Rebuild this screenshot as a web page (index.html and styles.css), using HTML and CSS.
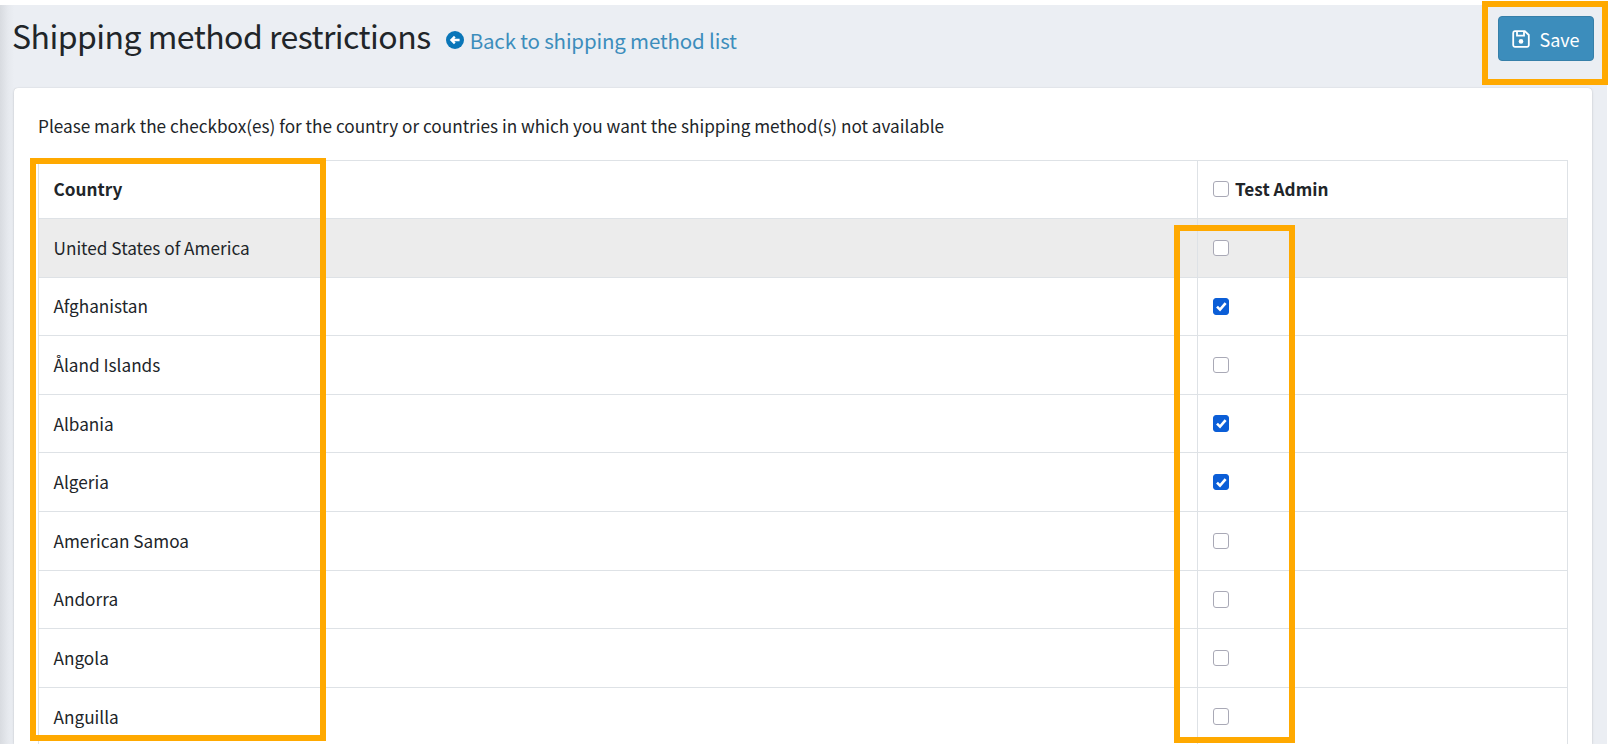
FILE: index.html
```html
<!DOCTYPE html>
<html lang="en">
<head>
<meta charset="utf-8">
<title>Shipping method restrictions</title>
<link rel="stylesheet" href="styles.css">
</head>
<body>
<div class="page">
  <header class="head">
    <div class="head-left">
      <h1 class="title">Shipping method restrictions</h1>
      <a class="back" href="#">
        <svg class="back-icon" viewBox="0 0 18 18" aria-hidden="true"><circle cx="9" cy="9" r="9" fill="#0a76b8"/><path d="M13.6 9H5.6M8.8 5.6L5.4 9l3.4 3.4" fill="none" stroke="#fff" stroke-width="2.3"/></svg>
        <span>Back to shipping method list</span>
      </a>
    </div>
    <button class="save" type="button">
      <svg class="save-icon" viewBox="0 0 18 18" aria-hidden="true"><path d="M2.8 1.2h10L16.8 5v10a1.8 1.8 0 0 1-1.8 1.8H3A1.8 1.8 0 0 1 1.2 15V3a1.8 1.8 0 0 1 1.6-1.8z" fill="none" stroke="#fff" stroke-width="1.8"/><path d="M5 1.6v4h7v-4" fill="none" stroke="#fff" stroke-width="1.8"/><circle cx="9" cy="11.4" r="2.3" fill="#fff"/></svg>
      <span>Save</span>
    </button>
  </header>
  <main class="card">
    <p class="hint">Please mark the checkbox(es) for the country or countries in which you want the shipping method(s) not available</p>
    <table class="grid">
      <thead>
        <tr><th class="c-country">Country</th><th class="c-admin"><label class="all"><input type="checkbox" class="box"><span>Test Admin</span></label></th></tr>
      </thead>
      <tbody>
        <tr class="hl"><td>United States of America</td><td><input type="checkbox" class="box"></td></tr>
        <tr><td>Afghanistan</td><td><input type="checkbox" class="box" checked></td></tr>
        <tr><td>Åland Islands</td><td><input type="checkbox" class="box"></td></tr>
        <tr><td>Albania</td><td><input type="checkbox" class="box" checked></td></tr>
        <tr><td>Algeria</td><td><input type="checkbox" class="box" checked></td></tr>
        <tr><td>American Samoa</td><td><input type="checkbox" class="box"></td></tr>
        <tr><td>Andorra</td><td><input type="checkbox" class="box"></td></tr>
        <tr><td>Angola</td><td><input type="checkbox" class="box"></td></tr>
        <tr><td>Anguilla</td><td><input type="checkbox" class="box"></td></tr>
      </tbody>
    </table>
  </main>
  <div class="mark mark-save"></div>
  <div class="mark mark-country"></div>
  <div class="mark mark-boxes"></div>
</div>
</body>
</html>
```
FILE: styles.css
```css
* { box-sizing: border-box; }
html, body { margin: 0; height: 744px; overflow: hidden; background: #fff; }
body { padding: 5px 0 0; font-family: "Noto Sans CJK SC", "Noto Sans", sans-serif; color: #212529; font-size: 17px; }
.page {
  position: relative;
  width: 1607px;
  height: 739px;
  padding: 0 15px 0 14px;
  background: linear-gradient(90deg, #d8dbe0 0, #e6e9ee 8px, #ebeef3 14px);
}
.head { display: flex; justify-content: space-between; align-items: flex-start; height: 83px; }
.head-left { display: flex; align-items: center; height: 62px; }
.title { margin: 0 0 2px -2px; font-size: 32px; letter-spacing: -0.53px; font-weight: 400; line-height: 40px; color: #212529; }
.back { display: flex; align-items: center; margin-left: 15px; margin-top: 7px; color: #3c8dbc; font-size: 20.5px; letter-spacing: -0.16px; line-height: 30px; text-decoration: none; }
.back-icon { width: 18px; height: 18px; margin-right: 6px; }
.save {
  display: flex; align-items: center; justify-content: center; gap: 9px;
  width: 96px; height: 45px; margin: 11px -2px 0 0; padding: 1px 0 0;
  background: #3c8dbc; border: 1px solid #367fa9; border-radius: 4px;
  color: #fff; font: inherit; font-size: 18px; line-height: 24px;
}
.save-icon { width: 18px; height: 18px; }
.card {
  height: 656px; padding: 25px 25px 0 25px; overflow: hidden;
  background: #fff; border-radius: 4px 4px 0 0;
  box-shadow: 0 0 1px rgba(0,0,0,.2), 0 1px 3px rgba(0,0,0,.12);
}
.hint { margin: 0 0 25px -1px; font-size: 17.2px; line-height: 26px; height: 22px; }
.grid { width: 1530px; border-collapse: collapse; table-layout: fixed; margin-left: -1px; }
.grid th, .grid td { border: 1px solid #dee2e6; padding: 0 15px 0 14.5px; text-align: left; height: 58.6px; vertical-align: middle; line-height: 24px; font-size: 17.2px; }
.grid thead th { height: 58px; font-weight: 700; line-height: 22px; padding-bottom: 1px; }
.c-admin { width: 370px; }
.hl td { background: #ececec; }
.all { display: flex; align-items: center; gap: 6px; }
.box {
  appearance: none; -webkit-appearance: none; display: block;
  width: 16.5px; height: 16.5px; margin: 0;
  background: #fff center / 100% 100% no-repeat;
  border: 1px solid #a9a9b6; border-radius: 3px;
}
.box:checked {
  background-color: #0b5ed7; border-color: #0b5ed7;
  background-image: url("data:image/svg+xml,%3Csvg xmlns='http://www.w3.org/2000/svg' viewBox='0 0 16 16'%3E%3Cpath d='M3.2 8.2l3.2 3.2 6-7' fill='none' stroke='%23fff' stroke-width='2.8'/%3E%3C/svg%3E");
}
.mark { position: absolute; border: 6px solid #ffa900; pointer-events: none; }
.mark-save { left: 1482px; top: -4px; width: 125.5px; height: 84px; }
.mark-country { left: 30px; top: 153px; width: 296px; height: 583px; }
.mark-boxes { left: 1174px; top: 220px; width: 121px; height: 518px; }
```
